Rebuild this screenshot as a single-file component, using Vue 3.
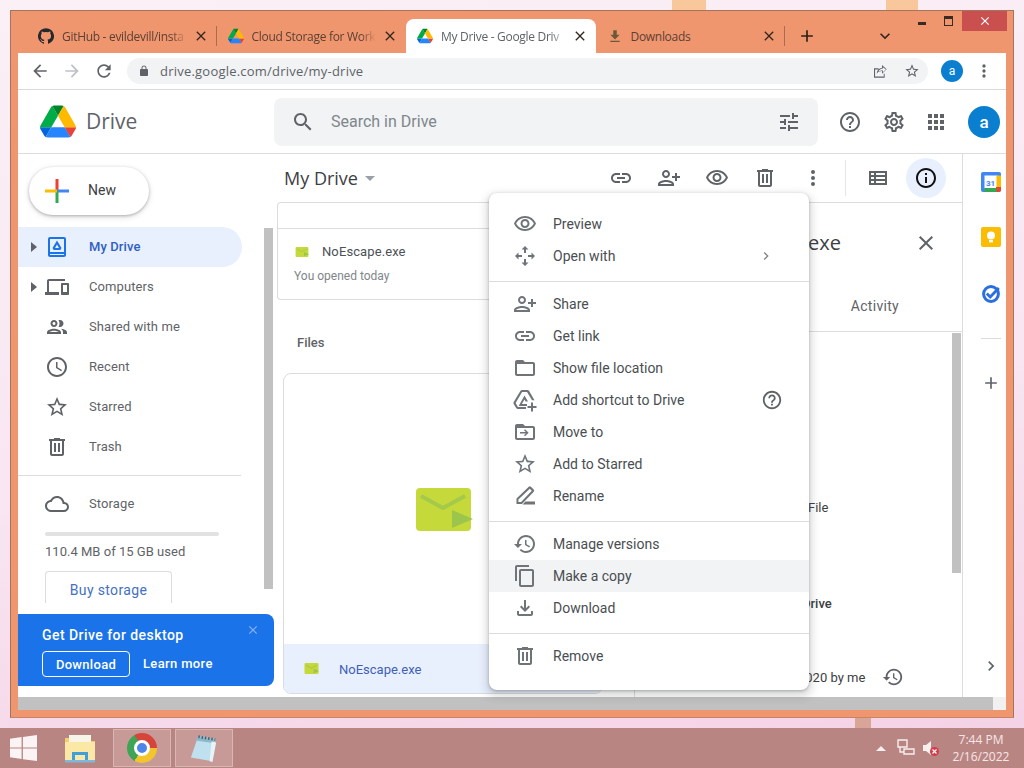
<template>
  <div class="desktop">
    <span class="fleck fleck-a"></span>
    <span class="fleck fleck-b"></span>
    <span class="fleck fleck-c"></span>

    <div class="window">
      <div class="tabstrip">
        <div v-for="tab in tabs" :key="tab.title" class="tab" :class="{ active: tab.active, sep: tab.sep }">
          <Ic v-if="tab.icon === 'github'" n="github" class="fav github" />
          <DriveLogo v-else-if="tab.icon === 'drive'" class="fav" />
          <Ic v-else n="tabDownload" class="fav dl" />
          <span class="tab-title" :class="{ plain: tab.icon === 'download' }">{{ tab.title }}</span>
          <Ic n="close" class="tab-x" />
        </div>
        <Ic n="add" class="new-tab" />
        <Ic n="expandMore" class="tab-list" />
        <div class="win-controls">
          <span class="win-btn"><i class="min"></i></span>
          <span class="win-btn"><i class="max"></i></span>
          <span class="win-btn win-close"><Ic n="close" class="win-x" /></span>
        </div>
      </div>

      <div class="toolbar">
        <Ic n="back" class="nav-ic" />
        <Ic n="forward" class="nav-ic off" />
        <Ic n="refresh" class="nav-ic" />
        <div class="omnibox">
          <Ic n="lock" class="lock" />
          <span class="url">drive.google.com/drive/my-drive</span>
          <Ic n="shareOut" class="omni-ic share" />
          <Ic n="star" class="omni-ic star" />
        </div>
        <span class="avatar-sm">a</span>
        <Ic n="more" class="chrome-more" />
      </div>

      <div class="drive-head">
        <div class="brand">
          <DriveLogo class="brand-logo" />
          <span class="brand-name">Drive</span>
        </div>
        <div class="search">
          <Ic n="search" class="search-ic" />
          <span class="search-text">Search in Drive</span>
          <Ic n="tune" class="tune" />
        </div>
        <div class="head-actions">
          <Ic n="help" class="head-ic" />
          <Ic n="settings" class="head-ic" />
          <Ic n="apps" class="head-ic" />
        </div>
        <span class="avatar">a</span>
      </div>

      <div class="body">
        <aside class="sidebar">
          <div class="side-content">
            <div class="new-btn">
              <svg class="plus" viewBox="0 0 24 24">
                <rect x="10.5" y="0" width="3" height="12" fill="#ea4335" />
                <rect x="12" y="10.5" width="12" height="3" fill="#4285f4" />
                <rect x="10.5" y="12" width="3" height="12" fill="#34a853" />
                <rect x="0" y="10.5" width="12" height="3" fill="#fbbc04" />
              </svg>
              <span class="new-label">New</span>
            </div>
            <nav class="side-nav">
              <div v-for="item in navItems" :key="item.label" class="nav-row" :class="{ current: item.current }">
                <span class="caret" :class="{ shown: item.caret }"></span>
                <Ic :n="item.icon" class="nav-row-ic" />
                <span class="nav-label">{{ item.label }}</span>
              </div>
            </nav>
            <div class="side-rule"></div>
            <div class="nav-row storage-row">
              <span class="caret"></span>
              <Ic n="cloud" class="nav-row-ic" />
              <span class="nav-label">Storage</span>
            </div>
            <div class="quota"></div>
            <div class="quota-text">110.4 MB of 15 GB used</div>
            <div class="buy">Buy storage</div>
          </div>
          <div class="side-scroll"></div>

          <div class="promo">
            <div class="promo-title">Get Drive for desktop</div>
            <div class="promo-actions">
              <span class="promo-btn">Download</span>
              <span class="promo-link">Learn more</span>
            </div>
            <Ic n="close" class="promo-x" />
          </div>
        </aside>

        <main class="main">
          <div class="main-bar">
            <span class="crumb">My Drive</span>
            <span class="crumb-arrow"></span>
            <div class="main-tools">
              <Ic n="link" class="tool" />
              <Ic n="personAdd" class="tool" />
              <Ic n="eye" class="tool" />
              <Ic n="trash" class="tool" />
              <Ic n="more" class="tool" />
              <span class="tool-rule"></span>
              <Ic n="listView" class="tool" />
              <span class="info-wrap"><Ic n="info" class="info-ic" /></span>
            </div>
          </div>

          <div class="panes">
            <section class="files">
              <div class="quick-card">
                <div class="quick-top"></div>
                <div class="quick-name"><FileIcon class="file-sm" /><span>NoEscape.exe</span></div>
                <div class="quick-sub">You opened today</div>
              </div>
              <div class="files-label">Files</div>
              <div class="file-card">
                <div class="file-preview"><FileIcon class="file-lg" /></div>
                <div class="file-foot"><FileIcon class="file-xs" /><span>NoEscape.exe</span></div>
              </div>
            </section>

            <section class="details">
              <div class="det-title">
                <span>NoEscape.exe</span>
                <Ic n="close" class="det-x" />
              </div>
              <div class="det-tabs"><span>Activity</span></div>
              <div class="det-body">
                <div class="det-rows">
                  <div class="det-file">File</div>
                  <div class="det-drive">Drive</div>
                  <div class="det-date"><span>2020 by me</span><Ic n="history" class="det-hist" /></div>
                </div>
                <div class="det-scroll"></div>
              </div>
            </section>
          </div>
        </main>

        <aside class="rail">
          <svg class="rail-ic cal" viewBox="0 0 20 20">
            <rect width="20" height="20" rx="2" fill="#4285f4" />
            <rect x="3.5" y="3.5" width="13" height="13" fill="#fff" />
            <path d="M15 15h5v2.5a2.5 2.5 0 0 1-2.5 2.5H15z" fill="#ea4335" />
            <rect x="15.5" y="3.5" width="4.5" height="11.5" fill="#fbbc04" />
            <rect x="3.5" y="16" width="12" height="4" fill="#34a853" />
            <text x="9.5" y="13.5" text-anchor="middle" class="cal-num">31</text>
          </svg>
          <svg class="rail-ic keep" viewBox="0 0 20 20">
            <rect width="20" height="20" rx="2" fill="#fbbc04" />
            <circle cx="10" cy="8.5" r="4" fill="#fff" />
            <rect x="8" y="13" width="4" height="2.4" fill="#fff" />
          </svg>
          <svg class="rail-ic tasks" viewBox="0 0 20 20">
            <circle cx="10" cy="10" r="7.4" fill="none" stroke="#2b6fdf" stroke-width="3" />
            <path d="M5.8 9.6l3.4 3.4 8.6-9" fill="none" stroke="#2b6fdf" stroke-width="2.8" />
          </svg>
          <span class="rail-rule"></span>
          <Ic n="add" class="rail-add" />
          <Ic n="chevron" class="rail-chev" />
        </aside>
      </div>

      <div class="h-scroll"><div class="h-thumb"></div></div>
    </div>

    <div class="menu">
      <div v-for="(group, g) in menuGroups" :key="g" class="menu-group">
        <div v-for="item in group" :key="item.label" class="menu-item" :class="{ hover: item.hover }">
          <Ic :n="item.icon" class="menu-ic" />
          <span class="menu-label">{{ item.label }}</span>
          <Ic v-if="item.chevron" n="chevron" class="menu-chev" />
          <Ic v-if="item.help" n="help" class="menu-help" />
        </div>
      </div>
    </div>

    <footer class="taskbar">
      <svg class="start" viewBox="0 0 27 26">
        <path d="M0 3.8L11.6 2.1V12.4H0zM12.9 1.9L27 0V12.4H12.9zM0 13.6H11.6V24L0 22.3zM12.9 13.6H27V26L12.9 24.2z" fill="#fbf4f4" />
      </svg>
      <span class="task-btn explorer">
        <svg viewBox="0 0 32 30" class="task-ic">
          <path d="M1 5h11l3 3h16v20H1z" fill="#f4cf6b" />
          <rect x="1" y="9" width="30" height="20" fill="#fbe7a6" />
          <rect x="5" y="2" width="22" height="7" fill="#f7f4e8" />
          <path d="M8 27v-8h16v8h-3v-5H11v5z" fill="#3f9fd8" />
          <rect x="1" y="27" width="30" height="2.4" fill="#7fb8dd" />
        </svg>
      </span>
      <span class="task-btn open"><span class="chrome-logo"><span class="chrome-dot"></span></span></span>
      <span class="task-btn open">
        <svg viewBox="0 0 32 32" class="task-ic">
          <path d="M10 3l18 3-3 24-23-4z" fill="#bfe0ee" />
          <path d="M10 3l18 3-1 5-20-3z" fill="#8fb7c9" />
          <path d="M24 9l5 1-4 21-3-1z" fill="#e8f3f7" />
          <path d="M10 4l18 3" fill="none" stroke="#48606c" stroke-width="3" stroke-dasharray="1.5 2" />
        </svg>
      </span>
      <div class="tray">
        <span class="tray-arrow"></span>
        <svg viewBox="0 0 18 18" class="tray-ic">
          <path d="M1 1h9v7H1zM7 10h10v5H7zM3 8v5h4" fill="none" stroke="#f7eeee" stroke-width="1.4" />
        </svg>
        <svg viewBox="0 0 18 18" class="tray-ic">
          <path d="M1 6h3l5-4v14l-5-4H1z" fill="#f7eeee" />
          <circle cx="12.5" cy="12.5" r="4.5" fill="#d33d4b" />
          <path d="M10.5 10.5l4 4m0-4l-4 4" stroke="#fff" stroke-width="1.2" />
        </svg>
        <div class="clock">
          <span>7:44 PM</span>
          <span>2/16/2022</span>
        </div>
      </div>
    </footer>
  </div>
</template>

<script setup>
import { h } from 'vue'

const icons = {
  github: 'M12 .3a12 12 0 0 0-3.8 23.4c.6.1.8-.3.8-.6v-2c-3.3.7-4-1.6-4-1.6-.6-1.4-1.4-1.8-1.4-1.8-1-.7.1-.7.1-.7 1.2 0 1.9 1.2 1.9 1.2 1 1.8 2.8 1.3 3.5 1 0-.8.4-1.3.7-1.6-2.7-.3-5.5-1.3-5.5-6 0-1.2.5-2.3 1.3-3.1-.2-.4-.6-1.6 0-3.2 0 0 1-.3 3.4 1.2a11.5 11.5 0 0 1 6 0c2.3-1.5 3.3-1.2 3.3-1.2.6 1.6.2 2.8 0 3.2.9.8 1.3 1.9 1.3 3.2 0 4.6-2.8 5.6-5.5 5.9.5.4.9 1 .9 2.2v3.3c0 .3.1.7.8.6A12 12 0 0 0 12 .3',
  tabDownload: 'M9 2h6v8h5l-8 8-8-8h5zM4 20h16v2.4H4z',
  close: 'M19 6.41L17.59 5 12 10.59 6.41 5 5 6.41 10.59 12 5 17.59 6.41 19 12 13.41 17.59 19 19 17.59 13.41 12z',
  add: 'M19 13h-6v6h-2v-6H5v-2h6V5h2v6h6v2z',
  expandMore: 'M16.59 8.59L12 13.17 7.41 8.59 6 10l6 6 6-6z',
  chevron: 'M10 6L8.59 7.41 13.17 12l-4.58 4.59L10 18l6-6z',
  back: 'M20 11H7.83l5.59-5.59L12 4l-8 8 8 8 1.41-1.41L7.83 13H20v-2z',
  forward: 'M12 4l-1.41 1.41L16.17 11H4v2h12.17l-5.58 5.59L12 20l8-8z',
  refresh: 'M17.65 6.35C16.2 4.9 14.21 4 12 4c-4.42 0-7.99 3.58-7.99 8s3.57 8 7.99 8c3.73 0 6.84-2.55 7.73-6h-2.08c-.82 2.33-3.04 4-5.65 4-3.31 0-6-2.69-6-6s2.69-6 6-6c1.66 0 3.14.69 4.22 1.78L13 11h7V4l-2.35 2.35z',
  lock: 'M18 8h-1V6c0-2.76-2.24-5-5-5S7 3.24 7 6v2H6c-1.1 0-2 .9-2 2v10c0 1.1.9 2 2 2h12c1.1 0 2-.9 2-2V10c0-1.1-.9-2-2-2zm-2.9 0H8.9V6c0-1.71 1.39-3.1 3.1-3.1 1.71 0 3.1 1.39 3.1 3.1v2z',
  shareOut: 'M3 8h7v1.6H4.6v10.8h13V16H19v6H3zM15 3l7 6.5-7 6.5v-4c-3.6 0-6 1-8 4 .4-4.600 3-8.300 8-9zm1.400 3.200v2.100c-3.300.3-5.500 1.900-6.600 4.200 1.600-1 3.600-1.400 6.600-1.400v2.700l4.500-4.100z',
  star: 'M22 9.24l-7.19-.62L12 2 9.19 8.63 2 9.24l5.46 4.73L5.82 21 12 17.27 18.18 21l-1.63-7.03L22 9.24zM12 15.4l-3.76 2.27 1-4.28-3.32-2.88 4.38-.38L12 6.1l1.71 4.04 4.38.38-3.32 2.88 1 4.28L12 15.4z',
  more: 'M12 8a2 2 0 1 0 0-4 2 2 0 0 0 0 4zm0 2a2 2 0 1 0 0 4 2 2 0 0 0 0-4zm0 6a2 2 0 1 0 0 4 2 2 0 0 0 0-4z',
  search: 'M15.5 14h-.79l-.28-.27C15.41 12.59 16 11.11 16 9.5 16 5.91 13.09 3 9.5 3S3 5.91 3 9.5 5.91 16 9.5 16c1.61 0 3.09-.59 4.23-1.57l.27.28v.79l5 4.99L20.49 19l-4.99-5zm-6 0C7.01 14 5 11.99 5 9.5S7.01 5 9.5 5 14 7.01 14 9.5 11.99 14 9.5 14z',
  tune: 'M3 17v2h6v-2H3zM3 5v2h10V5H3zm10 16v-2h8v-2h-8v-2h-2v6h2zM7 9v2H3v2h4v2h2V9H7zm14 4v-2H11v2h10zm-6-4h2V7h4V5h-4V3h-2v6z',
  help: 'M11 18h2v-2h-2v2zm1-16C6.48 2 2 6.48 2 12s4.48 10 10 10 10-4.48 10-10S17.52 2 12 2zm0 18c-4.41 0-8-3.59-8-8s3.59-8 8-8 8 3.59 8 8-3.59 8-8 8zm0-14c-2.21 0-4 1.79-4 4h2c0-1.1.9-2 2-2s2 .9 2 2c0 2-3 1.75-3 5h2c0-2.25 3-2.5 3-5 0-2.21-1.79-4-4-4z',
  settings: 'M19.43 12.98c.04-.32.07-.64.07-.98 0-.34-.03-.66-.07-.98l2.11-1.65c.19-.15.24-.42.12-.64l-2-3.46c-.09-.16-.26-.25-.44-.25-.06 0-.12.01-.17.03l-2.49 1c-.52-.4-1.08-.73-1.69-.98l-.38-2.65C14.46 2.18 14.25 2 14 2h-4c-.25 0-.46.18-.49.42l-.38 2.65c-.61.25-1.17.59-1.69.98l-2.49-1c-.06-.02-.12-.03-.18-.03-.17 0-.34.09-.43.25l-2 3.46c-.13.22-.07.49.12.64l2.11 1.65c-.04.32-.07.65-.07.98 0 .33.03.66.07.98l-2.11 1.65c-.19.15-.24.42-.12.64l2 3.46c.09.16.26.25.44.25.06 0 .12-.01.17-.03l2.49-1c.52.4 1.08.73 1.69.98l.38 2.65c.03.24.24.42.49.42h4c.25 0 .46-.18.49-.42l.38-2.65c.61-.25 1.17-.59 1.69-.98l2.49 1c.06.02.12.03.18.03.17 0 .34-.09.43-.25l2-3.46c.12-.22.07-.49-.12-.64l-2.11-1.65zm-1.98-1.71c.04.31.05.52.05.73 0 .21-.02.43-.05.73l-.14 1.13.89.7 1.08.84-.7 1.21-1.27-.51-1.04-.42-.9.68c-.43.32-.84.56-1.25.73l-1.06.43-.16 1.13-.2 1.35h-1.4l-.19-1.35-.16-1.13-1.06-.43c-.43-.18-.83-.41-1.23-.71l-.91-.7-1.06.43-1.27.51-.7-1.21 1.08-.84.89-.7-.14-1.13c-.03-.31-.05-.54-.05-.74s.02-.43.05-.73l.14-1.13-.89-.7-1.08-.84.7-1.21 1.27.51 1.04.42.9-.68c.43-.32.84-.56 1.25-.73l1.06-.43.16-1.13.2-1.35h1.39l.19 1.35.16 1.13 1.06.43c.43.18.83.41 1.23.71l.91.7 1.06-.43 1.27-.51.7 1.21-1.07.85-.89.7.14 1.13zM12 8c-2.21 0-4 1.79-4 4s1.79 4 4 4 4-1.79 4-4-1.79-4-4-4zm0 6c-1.1 0-2-.9-2-2s.9-2 2-2 2 .9 2 2-.9 2-2 2z',
  apps: 'M4 8h4V4H4v4zm6 12h4v-4h-4v4zm-6 0h4v-4H4v4zm0-6h4v-4H4v4zm6 0h4v-4h-4v4zm6-10v4h4V4h-4zm-6 4h4V4h-4v4zm6 6h4v-4h-4v4zm0 6h4v-4h-4v4z',
  myDrive: 'M19 2H5c-1.1 0-2 .9-2 2v16c0 1.1.9 2 2 2h14c1.100 0 2-.9 2-2V4c0-1.100-.9-2-2-2zM5 4h14v13H5zm0 15h14v1H5zM12 5.500l4.500 7.500-1.200 2H8.700l-1.200-2zm0 4l-2 3.500h4z',
  devices: 'M4 6h16V4H4c-1.1 0-2 .9-2 2v11H0v3h14v-3H4V6zm19 2h-6c-.55 0-1 .45-1 1v10c0 .55.45 1 1 1h6c.55 0 1-.45 1-1V9c0-.55-.45-1-1-1zm-1 9h-4v-7h4v7z',
  people: 'M9 13.750c-2.340 0-7 1.170-7 3.500V19h14v-1.750c0-2.330-4.660-3.500-7-3.500zM4.340 17c.84-.58 2.870-1.250 4.660-1.250s3.820.67 4.660 1.250H4.340zM9 12c1.930 0 3.500-1.570 3.500-3.500S10.930 5 9 5 5.500 6.570 5.500 8.500 7.070 12 9 12zm0-5c.83 0 1.500.67 1.500 1.500S9.830 10 9 10s-1.500-.67-1.500-1.500S8.170 7 9 7zm7.040 6.810c1.160.84 1.960 1.960 1.960 3.440V19h4v-1.750c0-2.020-3.500-3.170-5.960-3.440zM15 12c1.930 0 3.500-1.570 3.500-3.500S16.930 5 15 5c-.54 0-1.040.13-1.500.35.63.89 1 1.980 1 3.150s-.37 2.260-1 3.150c.46.22.96.35 1.500.35z',
  schedule: 'M11.99 2C6.47 2 2 6.48 2 12s4.47 10 9.99 10C17.52 22 22 17.52 22 12S17.52 2 11.99 2zM12 20c-4.42 0-8-3.58-8-8s3.58-8 8-8 8 3.58 8 8-3.58 8-8 8zm.5-13H11v6l5.25 3.15.75-1.23-4.5-2.67z',
  trash: 'M15 4V3H9v1H4v2h1v13c0 1.1.9 2 2 2h10c1.1 0 2-.9 2-2V6h1V4h-5zm2 15H7V6h10v13zM9 8h2v9H9zm4 0h2v9h-2z',
  cloud: 'M19.35 10.04C18.67 6.59 15.64 4 12 4 9.11 4 6.6 5.64 5.35 8.04 2.34 8.36 0 10.91 0 14c0 3.31 2.69 6 6 6h13c2.76 0 5-2.24 5-5 0-2.64-2.05-4.78-4.65-4.96zM19 18H6c-2.21 0-4-1.79-4-4 0-2.05 1.53-3.76 3.56-3.97l1.07-.11.5-.95C8.08 7.14 9.94 6 12 6c2.62 0 4.88 1.86 5.39 4.43l.3 1.5 1.53.11c1.56.1 2.78 1.41 2.78 2.96 0 1.65-1.35 3-3 3z',
  link: 'M3.9 12c0-1.71 1.39-3.1 3.1-3.1h4V7H7c-2.76 0-5 2.24-5 5s2.24 5 5 5h4v-1.9H7c-1.71 0-3.1-1.39-3.1-3.1zM8 13h8v-2H8v2zm9-6h-4v1.9h4c1.71 0 3.1 1.39 3.1 3.1s-1.39 3.1-3.1 3.1h-4V17h4c2.76 0 5-2.24 5-5s-2.24-5-5-5z',
  personAdd: 'M9 12c2.21 0 4-1.79 4-4s-1.79-4-4-4-4 1.79-4 4 1.790 4 4 4zm0-6c1.100 0 2 .9 2 2s-.9 2-2 2-2-.9-2-2 .9-2 2-2zm0 8c-2.670 0-8 1.340-8 4v2h16v-2c0-2.660-5.330-4-8-4zm-6 4c.2-.71 3.300-2 6-2 2.690 0 5.780 1.280 6 2H3zm15-3v-3h-3v-2h3V7h2v3h3v2h-3v3z',
  eye: 'M12 6c3.79 0 7.17 2.13 8.82 5.5C19.17 14.87 15.79 17 12 17s-7.17-2.13-8.82-5.5C4.83 8.13 8.21 6 12 6m0-2C7 4 2.73 7.11 1 11.5 2.73 15.89 7 19 12 19s9.27-3.11 11-7.5C21.27 7.11 17 4 12 4zm0 5c1.38 0 2.5 1.12 2.5 2.5S13.38 14 12 14s-2.5-1.12-2.5-2.5S10.62 9 12 9m0-2c-2.48 0-4.5 2.02-4.5 4.5S9.52 16 12 16s4.5-2.02 4.5-4.5S14.48 7 12 7z',
  listView: 'M3 5h18v14H3zm2 2v2h3V7zm5 0v2h9V7zm-5 4v2h3v-2zm5 0v2h9v-2zm-5 4v2h3v-2zm5 0v2h9v-2z',
  info: 'M11 7h2v2h-2zm0 4h2v6h-2zm1-9C6.48 2 2 6.48 2 12s4.48 10 10 10 10-4.48 10-10S17.52 2 12 2zm0 18c-4.41 0-8-3.59-8-8s3.59-8 8-8 8 3.59 8 8-3.59 8-8 8z',
  history: 'M13 3c-4.97 0-9 4.03-9 9H1l3.89 3.89.07.14L9 12H6c0-3.87 3.13-7 7-7s7 3.13 7 7-3.13 7-7 7c-1.93 0-3.68-.79-4.94-2.06l-1.42 1.42C8.27 19.99 10.51 21 13 21c4.97 0 9-4.03 9-9s-4.03-9-9-9zm-1 5v5l4.28 2.54.72-1.21-3.5-2.08V8H12z',
  openWith: 'M12 2l-3.500 3.500H11V9h2V5.500h2.500zM2 12l3.500 3.500V13H9v-2H5.500V8.500zM22 12l-3.500-3.500V11H15v2h3.500v2.500zM12 22l3.500-3.500H13V15h-2v3.500H8.500z',
  folder: 'M20 6h-8l-2-2H4c-1.1 0-1.99.9-1.99 2L2 18c0 1.1.9 2 2 2h16c1.1 0 2-.9 2-2V8c0-1.1-.9-2-2-2zm0 12H4V8h16v10z',
  moveTo: 'M20 6h-8l-2-2H4c-1.1 0-1.99.9-1.99 2L2 18c0 1.1.9 2 2 2h16c1.1 0 2-.9 2-2V8c0-1.1-.9-2-2-2zm0 12H4V8h16v10zM12 9.200l-1 1 1.800 1.800H7v1.500h5.800L11 15.300l1 1 3.600-3.550z',
  shortcut: 'M9.100 2h5.300c.7 0 1.400.4 1.750 1l5.300 9.200h-2.400L14 4H9.100L2.600 15l2.300 4H13v2H4.900c-.7 0-1.400-.4-1.750-1L.7 16c-.35-.6-.35-1.400 0-2L7.350 3c.35-.6 1.050-1 1.750-1zM11.500 7.500l3.500 6h-2.300l-1.200-2-2.700 4.600H14V18H5.700zM18 14.500h2V18h3.500v2H20v3.500h-2V20h-3.500v-2H18z',
  rename: 'M15.800 2.800a1.500 1.500 0 0 1 2.100 0l2.800 2.800a1.500 1.500 0 0 1 0 2.100L9 20H3.500v-5.500zM16.800 4.800L5.400 15.400v2.700h2.700L18.800 6.800zM12.500 17.500H22V20.500H9.500z',
  copy: 'M16 1H4c-1.100 0-2 .9-2 2v14h2V3h12V1zm3 4H8c-1.100 0-2 .9-2 2v14c0 1.100.9 2 2 2h11c1.100 0 2-.9 2-2V7c0-1.100-.9-2-2-2zm0 16H8V7h11v14z',
  download: 'M18 15v3H6v-3H4v3c0 1.100.9 2 2 2h12c1.100 0 2-.9 2-2v-3h-2zm-1-4l-1.410-1.410L13 12.170V4h-2v8.170L8.410 9.590 7 11l5 5 5-5z'
}

// tiny helpers so the template isn't drowned in svg markup
const Ic = (props) =>
  h('svg', { viewBox: '0 0 24 24', fill: 'currentColor', 'fill-rule': 'evenodd' }, [h('path', { d: icons[props.n] })])
Ic.props = ['n']

const drivePaths = [
  ['m6.6 66.85 3.85 6.65c.8 1.4 1.95 2.5 3.3 3.3l13.75-23.8h-27.5c0 1.55.4 3.1 1.2 4.5z', '#0066da'],
  ['m43.65 25-13.75-23.8c-1.35.8-2.5 1.9-3.3 3.3l-25.4 44a9.06 9.06 0 0 0 -1.2 4.5h27.5z', '#00ac47'],
  ['m73.55 76.8c1.35-.8 2.5-1.9 3.3-3.3l1.6-2.75 7.65-13.25c.8-1.4 1.2-2.95 1.2-4.5h-27.502l5.852 11.5z', '#ea4335'],
  ['m43.65 25 13.75-23.8c-1.35-.8-2.9-1.2-4.5-1.2h-18.5c-1.6 0-3.15.45-4.5 1.2z', '#00832d'],
  ['m59.8 53h-32.3l-13.75 23.8c1.35.8 2.9 1.2 4.5 1.2h50.8c1.6 0 3.15-.45 4.5-1.2z', '#2684fc'],
  ['m73.4 26.5-12.7-22c-.8-1.4-1.95-2.5-3.3-3.3l-13.75 23.8 16.15 28h27.45c0-1.55-.4-3.1-1.2-4.5z', '#ffba00']
]
const DriveLogo = () =>
  h('svg', { viewBox: '0 0 87.3 78' }, drivePaths.map(([d, fill]) => h('path', { d, fill })))

const FileIcon = () =>
  h('svg', { viewBox: '0 0 55 43', overflow: 'visible' }, [
    h('rect', { width: 55, height: 43, rx: 4, fill: '#c6d93b' }),
    h('path', { d: 'M5 8l22 12L49 8', fill: 'none', stroke: '#a5c94a', 'stroke-width': 4 }),
    h('path', { d: 'M36 22l21 9-21 9z', fill: '#9cc54c' })
  ])

const tabs = [
  { title: 'GitHub - evildevill/insta', icon: 'github', sep: true },
  { title: 'Cloud Storage for Work', icon: 'drive' },
  { title: 'My Drive - Google Driv', icon: 'drive', active: true },
  { title: 'Downloads', icon: 'download', sep: true }
]

const navItems = [
  { label: 'My Drive', icon: 'myDrive', caret: true, current: true },
  { label: 'Computers', icon: 'devices', caret: true },
  { label: 'Shared with me', icon: 'people' },
  { label: 'Recent', icon: 'schedule' },
  { label: 'Starred', icon: 'star' },
  { label: 'Trash', icon: 'trash' }
]

const menuGroups = [
  [
    { label: 'Preview', icon: 'eye' },
    { label: 'Open with', icon: 'openWith', chevron: true }
  ],
  [
    { label: 'Share', icon: 'personAdd' },
    { label: 'Get link', icon: 'link' },
    { label: 'Show file location', icon: 'folder' },
    { label: 'Add shortcut to Drive', icon: 'shortcut', help: true },
    { label: 'Move to', icon: 'moveTo' },
    { label: 'Add to Starred', icon: 'star' },
    { label: 'Rename', icon: 'rename' }
  ],
  [
    { label: 'Manage versions', icon: 'history' },
    { label: 'Make a copy', icon: 'copy', hover: true },
    { label: 'Download', icon: 'download' }
  ],
  [{ label: 'Remove', icon: 'trash' }]
]
</script>

<style>
html, body {
  margin: 0;
  background: #f6dcec;
}
</style>

<style scoped>
.desktop {
  position: relative;
  width: 1024px;
  height: 768px;
  overflow: hidden;
  font-family: Roboto, "Liberation Sans", sans-serif;
  background: linear-gradient(172deg, #fbf0f6 0%, #f8e6f2 55%, #f5d3e6 95%);
  display: flex;
  flex-direction: column;
}
.desktop svg { display: block; flex: none; }

.fleck { position: absolute; }
.fleck-a { left: 672px; top: 0; width: 34px; height: 10px; background: #f8c79c; }
.fleck-b { left: 886px; top: 0; width: 32px; height: 10px; background: #f8c79c; }
.fleck-c { left: 855px; top: 718px; width: 16px; height: 10px; background: #d9a596; }

.window {
  width: 1004px;
  height: 708px;
  margin: 10px 0 10px 10px;
  box-sizing: border-box;
  background: #f0966f;
  border: 1px solid #a5745f;
  border-bottom-color: #c98365;
  padding: 0 7px 7px;
  flex: none;
}

/* tab strip */
.tabstrip {
  height: 42px;
  display: flex;
  align-items: flex-end;
  margin: 0 -7px;
  padding-left: 16px;
  font-family: "Open Sans", "Liberation Sans", sans-serif;
  font-size: 12px;
  letter-spacing: -.3px;
  color: #5b4034;
}
.tab {
  width: 189.5px;
  height: 34px;
  box-sizing: border-box;
  flex: none;
  display: flex;
  align-items: center;
  padding: 0 8px 0 11px;
  position: relative;
}
.tab.active {
  background: #fff;
  border-radius: 8px 8px 0 0;
  color: #5f6368;
}
.tab.sep::after {
  content: "";
  position: absolute;
  right: 0;
  top: 7px;
  height: 20px;
  width: 1px;
  background: #a86e52;
}
.fav { width: 16px; height: 16px; margin-right: 8px; }
.github { color: #24292e; }
.dl { color: #6b5a3a; width: 14px; height: 14px; margin: 0 9px 0 1px; }
.tab-title {
  flex: 1;
  min-width: 0;
  white-space: nowrap;
  -webkit-mask-image: linear-gradient(90deg, #000 88%, transparent 100%);
  mask-image: linear-gradient(90deg, #000 88%, transparent 100%);
}
.tab-title.plain { -webkit-mask-image: none; mask-image: none; }
.tab-x { width: 16px; height: 16px; color: #33261f; margin-left: 6px; }
.new-tab { width: 20px; height: 20px; margin: 0 0 7px 12px; color: #2e1f18; }
.tab-list { width: 20px; height: 20px; margin: 0 0 7px 58px; color: #33261f; }
.win-controls { display: flex; align-self: flex-start; margin-left: auto; margin-right: 6px; height: 20px; }
.win-btn { width: 27px; display: flex; align-items: center; justify-content: center; }
.win-close { width: 45px; background: #c9504f; color: #fff; }
.win-x { width: 14px; height: 14px; }
.min { width: 8px; height: 3px; background: #3a2a22; margin-top: 5px; }
.max { height: 6px; border: 1px solid #3a2a22; border-top-width: 3px; box-sizing: content-box; width: 7px; }

/* browser toolbar */
.toolbar {
  height: 37px;
  box-sizing: border-box;
  background: #fff;
  border-bottom: 1px solid #d9dadc;
  display: flex;
  align-items: center;
  padding-left: 12px;
}
.nav-ic { width: 20px; height: 20px; color: #5f6368; margin-right: 12px; }
.nav-ic.off { color: #bdc1c6; }
.omnibox {
  margin-left: 1px;
  width: 801px;
  height: 26px;
  border-radius: 13px;
  background: #f1f3f4;
  display: flex;
  align-items: center;
  padding: 0 8px 0 11px;
  box-sizing: border-box;
}
.lock { width: 12px; height: 12px; color: #5f6368; }
.url {
  margin-left: 10px;
  font-family: "Open Sans", "Liberation Sans", sans-serif;
  font-size: 13px;
  letter-spacing: .22px;
  color: #5f6368;
}
.omni-ic { width: 16px; height: 16px; color: #5f6368; }
.share { margin-left: auto; margin-right: 16px; }
.avatar-sm {
  margin-left: 13px;
  width: 22px;
  height: 22px;
  border-radius: 50%;
  background: #0b7fcf;
  color: #fff;
  font-size: 12px;
  display: flex;
  align-items: center;
  justify-content: center;
}
.chrome-more { width: 20px; height: 20px; color: #5f6368; margin-left: 11px; }

/* drive header */
.drive-head {
  height: 64px;
  box-sizing: border-box;
  background: #fff;
  border-bottom: 1px solid #dadce0;
  display: flex;
  align-items: center;
}
.brand { width: 256px; display: flex; align-items: center; padding-left: 22px; box-sizing: border-box; }
.brand-logo { width: 36px; height: 33px; }
.brand-name {
  margin: 0 0 1px 10px;
  font-family: "Open Sans", "Liberation Sans", sans-serif;
  font-size: 21px;
  color: #5f6368;
}
.search {
  width: 544px;
  height: 48px;
  background: #f1f3f4;
  border-radius: 8px;
  display: flex;
  align-items: center;
  padding: 0 17px;
  box-sizing: border-box;
}
.search-ic { width: 24px; height: 24px; color: #5f6368; }
.search-text { margin-left: 16px; font-size: 16px; color: #80868b; }
.tune { width: 24px; height: 24px; color: #5f6368; margin-left: auto; }
.head-actions { display: flex; align-items: center; margin-left: 20px; gap: 20px; color: #5f6368; }
.head-ic { width: 24px; height: 24px; }
.head-ic:last-child { margin-left: -2px; }
.avatar {
  margin-left: 20px;
  width: 32px;
  height: 32px;
  border-radius: 50%;
  background: #0b7fcf;
  color: #fff;
  font-size: 17px;
  font-weight: 500;
  display: flex;
  align-items: center;
  justify-content: center;
}

/* page body */
.body { height: 543px; background: #fff; display: flex; }

.sidebar { width: 255px; flex: none; position: relative; display: flex; }
.side-content { width: 246px; flex: none; }
.side-scroll { width: 9px; height: 361px; margin-top: 74px; background: #c1c1c1; flex: none; }
.new-btn {
  margin: 13px 0 0 11px;
  width: 120px;
  height: 48px;
  box-sizing: border-box;
  border-radius: 24px;
  background: #fff;
  box-shadow: 0 1px 3px rgba(60, 64, 67, .35), 0 2px 6px rgba(60, 64, 67, .15);
  display: flex;
  align-items: center;
  padding-left: 16px;
  font-size: 14px;
  color: #3c4043;
}
.new-label { margin-bottom: 2px; }
.plus { width: 24px; height: 24px; margin-right: 19px; }
.side-nav { margin-top: 12px; }
.nav-row {
  width: 224px;
  height: 40px;
  box-sizing: border-box;
  display: flex;
  align-items: center;
  padding-left: 12px;
  font-size: 13px;
  letter-spacing: .1px;
  color: #5f6368;
  border-radius: 0 20px 20px 0;
}
.nav-row.current { background: #e8f0fe; color: #2f5fc4; font-weight: 500; }
.nav-label { margin-bottom: 2px; }
.caret { width: 8px; height: 10px; flex: none; }
.caret.shown {
  width: 0;
  height: 0;
  border-left: 6px solid #5f6368;
  border-top: 5px solid transparent;
  border-bottom: 5px solid transparent;
  margin-right: 1px;
  margin-left: 1px;
}
.nav-row-ic { width: 24px; height: 24px; margin: 0 20px 0 7px; color: #5f6368; }
.nav-row.current .nav-row-ic { color: #1a73e8; }
.side-rule { width: 223px; height: 1px; background: #dadce0; margin-top: 8px; }
.storage-row { margin-top: 8px; }
.quota { width: 174px; height: 4px; margin: 8px 0 0 27px; background: #dfe1e3; border-radius: 2px; }
.quota-text { margin: 8px 0 0 27px; font-size: 13px; line-height: 16px; color: #5f6368; letter-spacing: .02px; }
.buy {
  margin: 11px 0 0 27px;
  width: 127px;
  height: 32px;
  box-sizing: border-box;
  border: 1px solid #dadce0;
  border-bottom: 0;
  border-radius: 4px 4px 0 0;
  text-align: center;
  font-size: 14px;
  letter-spacing: .35px;
  line-height: 36px;
  color: #4470c4;
}
.promo {
  position: absolute;
  left: 0;
  top: 460px;
  width: 256px;
  height: 72px;
  box-sizing: border-box;
  padding: 13px 0 0 24px;
  background: #1a73e8;
  border-radius: 0 8px 8px 0;
  color: #fff;
  font-weight: 500;
}
.promo-title { font-size: 14px; line-height: 17px; letter-spacing: .45px; }
.promo-actions { display: flex; align-items: center; margin-top: 7px; }
.promo-btn {
  width: 88px;
  height: 26px;
  box-sizing: border-box;
  border: 1px solid #fff;
  border-radius: 4px;
  font-size: 13px;
  letter-spacing: .3px;
  text-align: center;
  line-height: 26px;
}
.promo-link { margin: 0 0 2px 13px; font-size: 13px; letter-spacing: .35px; }
.promo-x { position: absolute; right: 14px; top: 9px; width: 14px; height: 14px; color: #8ab4f8; }

/* main */
.main { width: 689px; flex: none; }
.main-bar { height: 48px; display: flex; align-items: center; padding-left: 11px; }
.crumb { font-family: "Open Sans", "Liberation Sans", sans-serif; font-size: 18px; color: #3c4043; }
.crumb-arrow {
  margin-left: 7px;
  border-top: 5px solid #9aa0a6;
  border-left: 5px solid transparent;
  border-right: 5px solid transparent;
}
.main-tools { margin-left: auto; display: flex; align-items: center; padding-right: 16px; color: #5f6368; }
.tool { width: 24px; height: 24px; margin-right: 24px; }
.tool-rule { width: 1px; height: 36px; background: #e4e6e8; margin-right: 20px; }
.main-tools .tool:nth-of-type(5) { margin-right: 20px; }
.main-tools .tool:last-of-type { margin-right: 24px; }
.info-wrap {
  width: 40px;
  height: 40px;
  border-radius: 50%;
  background: #e8f0fe;
  color: #111;
  display: flex;
  align-items: center;
  justify-content: center;
  margin-left: -8px;
}
.info-ic { width: 24px; height: 24px; }

.panes { display: flex; height: 495px; }
.files { width: 361px; flex: none; padding-left: 4px; box-sizing: border-box; }
.quick-card {
  height: 98px;
  box-sizing: border-box;
  border: 1px solid #dadce0;
  border-right: 0;
  border-radius: 4px 0 0 4px;
  color: #5f6368;
}
.quick-top { height: 25px; border-bottom: 1px solid #dadce0; }
.quick-name { display: flex; align-items: center; margin: 15px 0 0 17px; font-size: 13px; color: #4d5156; letter-spacing: .1px; }
.file-sm { width: 14px; height: 10px; margin-right: 13px; }
.quick-sub { margin: 10px 0 0 16px; font-size: 12px; color: #80868b; }
.files-label { margin: 34px 0 0 20px; font-size: 13px; font-weight: 500; line-height: 18px; color: #5f6368; }
.file-card {
  margin: 21px 0 0 6px;
  width: 320px;
  height: 321px;
  box-sizing: border-box;
  border: 1px solid #dadce0;
  border-radius: 8px;
  overflow: hidden;
  display: flex;
  flex-direction: column;
}
.file-preview { flex: 1; display: flex; align-items: center; justify-content: center; }
.file-lg { width: 55px; height: 43px; }
.file-foot {
  height: 49px;
  background: #e8f0fe;
  display: flex;
  align-items: center;
  padding-left: 20px;
  font-size: 13px;
  color: #3f5fb5;
}
.file-foot span { margin-top: 2px; }
.file-xs { width: 15px; height: 11px; margin-right: 20px; }

.details { width: 328px; flex: none; border-left: 1px solid #dadce0; box-sizing: border-box; border-top: 1px solid #dadce0; }
.det-title {
  height: 79px;
  display: flex;
  align-items: center;
  justify-content: flex-end;
  padding-right: 24px;
  font-family: "Open Sans", "Liberation Sans", sans-serif;
  font-size: 20px;
  color: #3c4043;
}
.det-title span { margin-right: 73px; }
.det-x { width: 24px; height: 24px; color: #5f6368; }
.det-tabs {
  height: 50px;
  box-sizing: border-box;
  border-bottom: 1px solid #dadce0;
  display: flex;
  align-items: center;
  justify-content: flex-end;
  padding: 0 63px 2px 0;
  font-size: 14px;
  letter-spacing: .3px;
  color: #5f6368;
}
.det-body { display: flex; }
.det-rows { flex: 1; font-size: 13px; color: #3c4043; }
.det-file { margin: 166px 0 0 173px; line-height: 20px; }
.det-drive { margin: 76px 0 0 167px; line-height: 20px; font-weight: 500; }
.det-date { display: flex; align-items: center; margin: 53px 0 0 163px; height: 20px; }
.det-hist { width: 22px; height: 22px; color: #5f6368; margin-left: 17px; }
.det-scroll { width: 9px; height: 240px; margin: 1px 1px 0 0; background: #c1c1c1; }

/* right rail */
.rail {
  width: 44px;
  flex: none;
  box-sizing: border-box;
  border-left: 1px solid #dadce0;
  padding-left: 12px;
  display: flex;
  flex-direction: column;
  align-items: center;
}
.rail-ic { width: 20px; height: 20px; }
.cal { margin-top: 18px; }
.cal-num { font-family: Roboto, sans-serif; font-size: 8px; font-weight: 700; fill: #4285f4; }
.keep { margin-top: 35px; }
.tasks { margin-top: 37px; }
.rail-rule { width: 20px; height: 1px; background: #dadce0; margin-top: 34px; }
.rail-add { width: 20px; height: 20px; margin-top: 34px; color: #5f6368; }
.rail-chev { width: 20px; height: 20px; margin-top: 263px; color: #5f6368; }

.h-scroll { height: 13px; background: #f1f1f1; }
.h-thumb { width: 975px; height: 100%; background: #c1c1c1; }

/* context menu */
.menu {
  position: absolute;
  left: 489px;
  top: 193px;
  width: 320px;
  height: 497px;
  box-sizing: border-box;
  background: #fff;
  border-radius: 8px;
  box-shadow: 0 1px 3px rgba(60, 64, 67, .35), 0 4px 8px 3px rgba(60, 64, 67, .18);
  padding-top: 15px;
}
.menu-group { border-bottom: 1px solid #dadce0; padding-bottom: 9px; margin-bottom: 6px; }
.menu-group:last-child { border-bottom: 0; margin: 0; padding: 0; }
.menu-item {
  height: 32px;
  display: flex;
  align-items: center;
  padding-left: 24px;
  font-size: 14px;
  color: #4a4e52;
}
.menu-item.hover { background: #f1f3f4; }
.menu-ic { width: 24px; height: 24px; color: #6f7479; margin-right: 16px; }
.menu-chev { width: 16px; height: 16px; margin-left: auto; margin-right: 35px; color: #80868b; }
.menu-help { width: 22px; height: 22px; margin-left: auto; margin-right: 26px; color: #5f6368; }

/* taskbar */
.taskbar {
  height: 40px;
  flex: none;
  display: flex;
  align-items: center;
  background: #b98583;
  color: #f7e7e7;
  font-family: "Open Sans", "Liberation Sans", sans-serif;
}
.start { width: 27px; height: 26px; margin-left: 10px; }
.task-btn {
  width: 58px;
  height: 38px;
  box-sizing: border-box;
  display: flex;
  align-items: center;
  justify-content: center;
  margin-left: 4px;
}
.explorer { margin-left: 14px; }
.task-btn.open { background: #c79a98; border: 1px solid #d7b6b4; }
.task-ic { width: 32px; height: 30px; }
.chrome-logo {
  width: 30px;
  height: 30px;
  border-radius: 50%;
  background: conic-gradient(#d6453a 0 90deg, #f2c52d 90deg 210deg, #3da555 210deg 330deg, #d6453a 330deg 360deg);
  display: flex;
  align-items: center;
  justify-content: center;
}
.chrome-dot { width: 10px; height: 10px; border-radius: 50%; background: #4d86e8; border: 3px solid #fff; }
.tray { margin-left: auto; display: flex; align-items: center; height: 100%; }
.tray-arrow { border-bottom: 5px solid #f7eeee; border-left: 5px solid transparent; border-right: 5px solid transparent; margin-right: 11px; }
.tray-ic { width: 18px; height: 18px; margin-right: 7px; }
.clock {
  width: 62px;
  margin: 0 12px 0 3px;
  display: flex;
  flex-direction: column;
  align-items: center;
  font-size: 12px;
  line-height: 17px;
}
</style>
